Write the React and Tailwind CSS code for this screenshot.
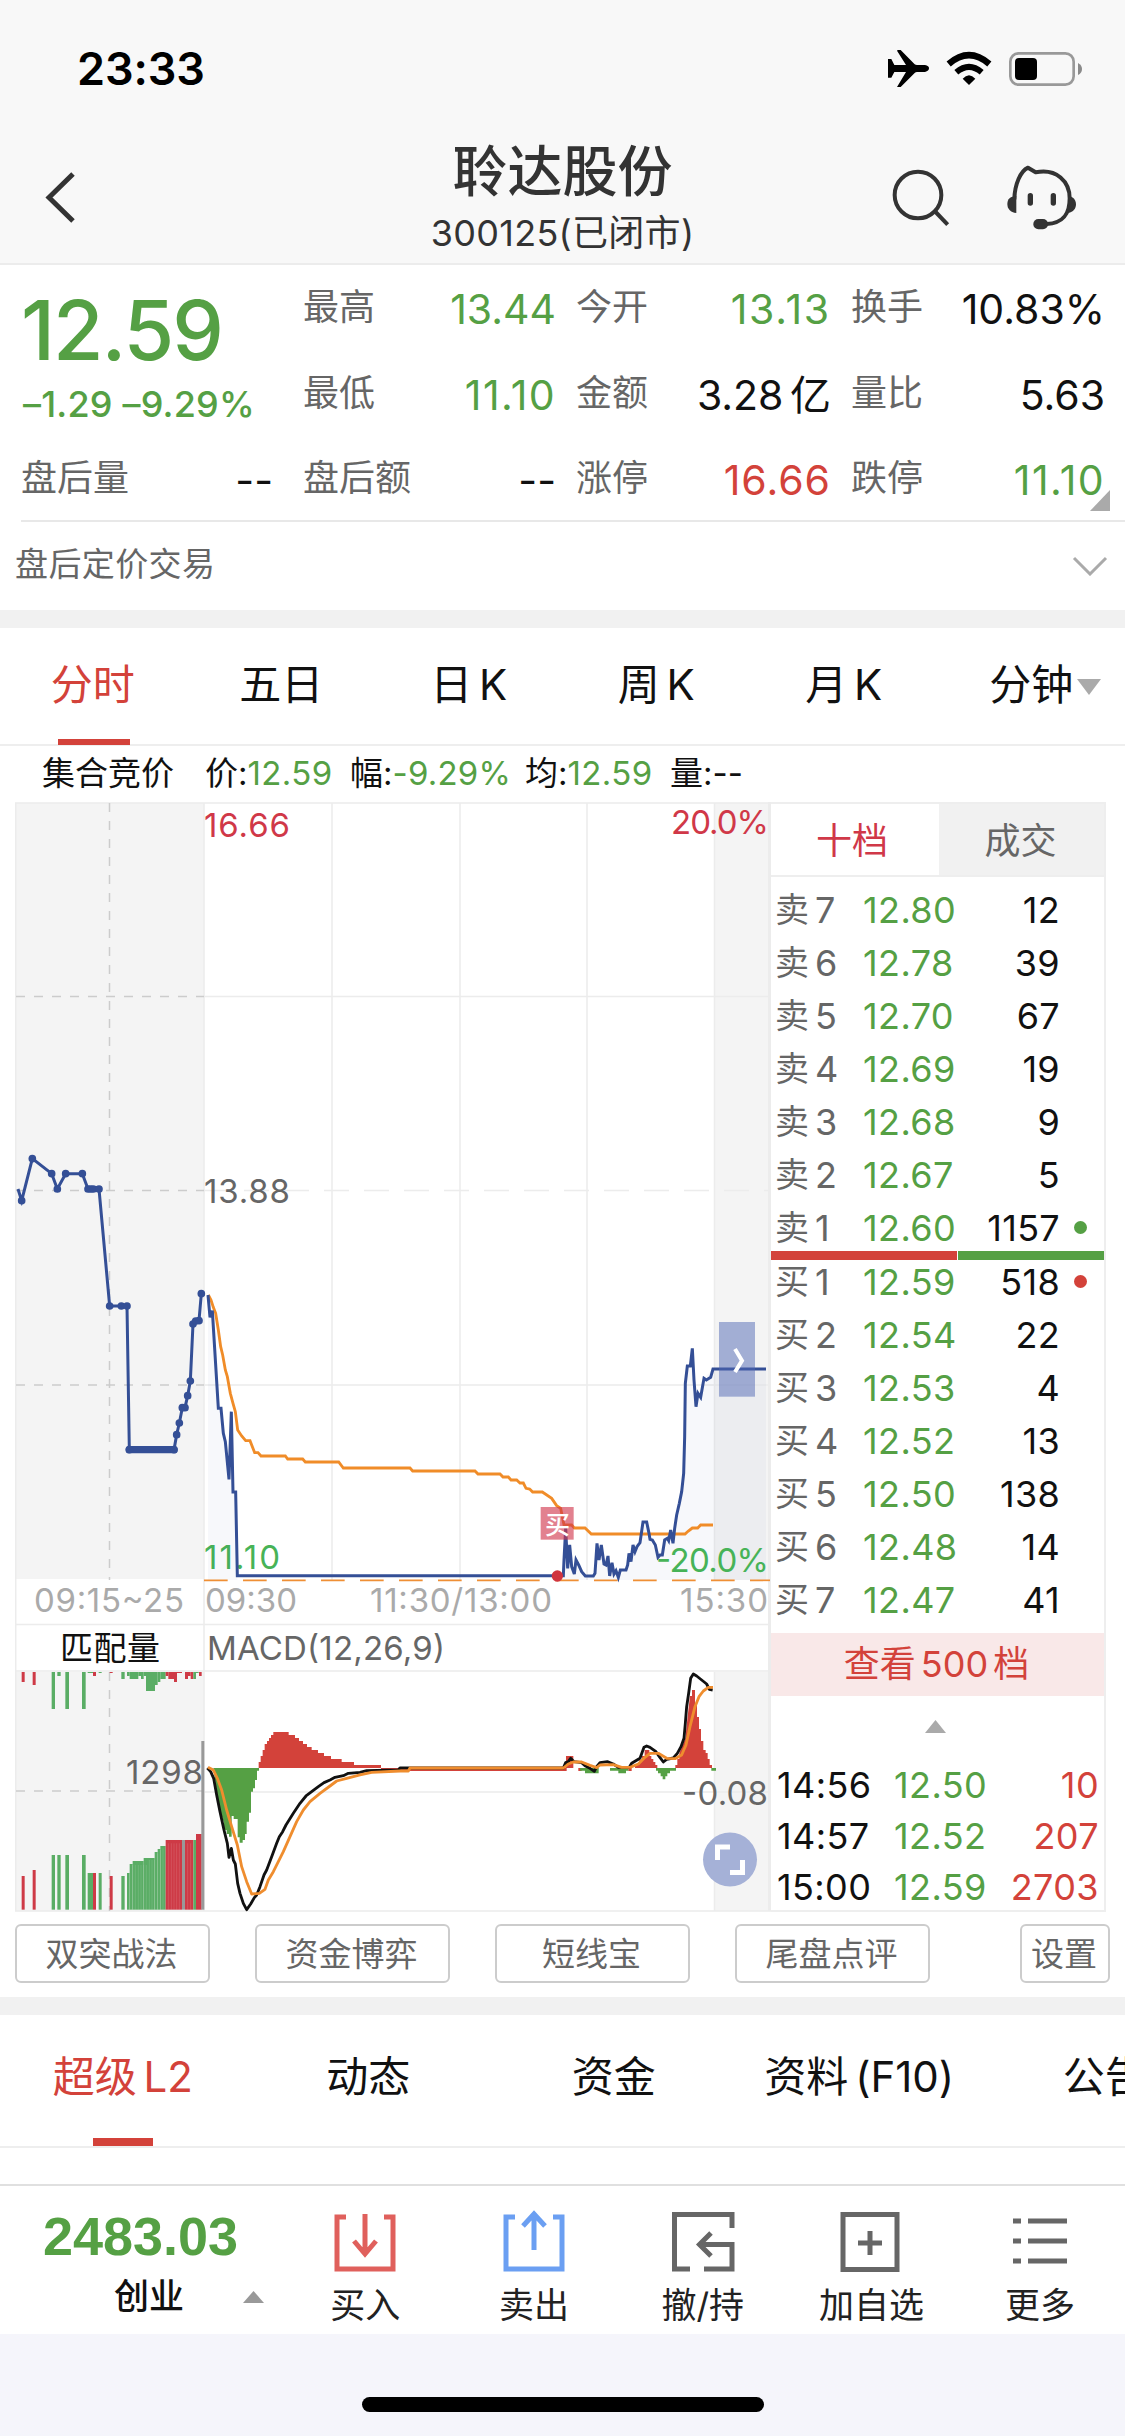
import React from 'react'

const GREEN = '#55a044'
const RED = '#d3423a'

const quotes = [
  { label: '最高', value: '13.44', color: 'text-[#55a044]' },
  { label: '今开', value: '13.13', color: 'text-[#55a044] tracking-[1.8px]' },
  { label: '换手', value: '10.83%', color: 'text-[#111]' },
  { label: '最低', value: '11.10', color: 'text-[#55a044] tracking-[1.4px]' },
  { label: '金额', value: '3.28 亿', color: 'text-[#111] [word-spacing:-5px]' },
  { label: '量比', value: '5.63', color: 'text-[#111]' },
]

const afterHours = [
  { label: '盘后量', value: '--', color: 'text-[#111]' },
  { label: '盘后额', value: '--', color: 'text-[#111]' },
  { label: '涨停', value: '16.66', color: 'text-[#d3423a] tracking-[1px]' },
  { label: '跌停', value: '11.10', color: 'text-[#55a044] tracking-[1.4px]' },
]

const periods = ['分时', '五日', '日 K', '周 K', '月 K', '分钟']

const asks = [
  ['卖', 7, '12.80', '12'],
  ['卖', 6, '12.78', '39'],
  ['卖', 5, '12.70', '67'],
  ['卖', 4, '12.69', '19'],
  ['卖', 3, '12.68', '9'],
  ['卖', 2, '12.67', '5'],
  ['卖', 1, '12.60', '1157', 'bg-[#55a044]'],
]

const bids = [
  ['买', 1, '12.59', '518', 'bg-[#d3423a]'],
  ['买', 2, '12.54', '22'],
  ['买', 3, '12.53', '4'],
  ['买', 4, '12.52', '13'],
  ['买', 5, '12.50', '138'],
  ['买', 6, '12.48', '14'],
  ['买', 7, '12.47', '41'],
]

const trades = [
  ['14:56', '12.50', '10'],
  ['14:57', '12.52', '207'],
  ['15:00', '12.59', '2703'],
]

const strategies = ['双突战法', '资金博弈', '短线宝', '尾盘点评']
const sections = ['超级 L2', '动态', '资金', '资料 (F10)', '公告']

// call auction points, in chart units of a third of a pixel
const auction = [
  [65, 302], [97, 176], [155, 221], [172, 267], [197, 221], [247, 221], [264, 267], [272, 267],
  [280, 267], [297, 267], [329, 618], [364, 618], [381, 618], [388, 1049], [522, 1049], [530, 1004],
  [538, 969], [547, 923], [555, 923], [563, 887], [571, 843], [579, 672], [587, 663], [597, 662], [604, 581],
]

// [x, width, depth, fill]
const g = '#5aad65'
const r = '#ce3a46'
const unmatched = [
  [65, 9, 30, r], [98, 9, 39, r], [155, 10, 111, g], [172, 10, 12, g], [196, 11, 111, g], [246, 11, 111, g],
  [263, 16, 3, g], [279, 9, 12, r], [296, 9, 3, g], [329, 9, 3, r], [364, 10, 21, g], [381, 8, 12, g],
  [389, 26, 21, g], [415, 8, 12, g], [423, 8, 21, g], [431, 7, 12, g], [438, 27, 57, g], [465, 8, 39, g],
  [473, 8, 30, g], [481, 16, 21, g], [497, 8, 12, r], [505, 17, 21, r], [522, 9, 30, r], [531, 15, 3, r],
  [555, 9, 21, r], [564, 8, 12, r], [572, 8, 21, r], [580, 8, 21, g], [588, 8, 3, g], [597, 8, 12, r],
]
const matched = [
  [65, 9, 101, r], [98, 9, 119, r], [155, 10, 164, g], [172, 10, 164, g], [196, 11, 164, g], [246, 11, 164, g],
  [263, 16, 110, g], [279, 9, 110, r], [296, 9, 110, g], [329, 9, 101, r], [364, 10, 101, g], [381, 8, 110, g],
  [389, 9, 137, g], [398, 33, 146, g], [431, 33, 155, g], [464, 9, 173, g], [473, 8, 182, g], [481, 16, 191, g],
  [497, 49, 209, r], [546, 9, 209, '#999'], [555, 25, 209, r], [580, 8, 209, g], [588, 17, 227, r],
]

function StatusIcons() {
  return (
    <svg className="h-[220px] w-[250px]" viewBox="0 0 750 660" fill="none">
      <path
        d="M39 87H49L58 105H93L66 62Q66 60 70 60H77L119 103Q122 105 126 105H150Q162 107 162 115T150 126H126Q122 126 119 129L77 171H66L93 126H58L49 143H39Z"
        fill="#000"
      />
      <path d="M221 102Q282 49 343 102" stroke="#000" strokeWidth="19" />
      <path d="M244 127Q282 94 320 127" stroke="#000" strokeWidth="18" />
      <path d="M263 146Q282 125 301 146L282 165Z" fill="#000" />
      <rect x="406" y="70" width="190" height="94" rx="25" stroke="#999" strokeWidth="8" />
      <rect x="420" y="84" width="66" height="66" rx="12" fill="#000" />
      <path d="M609 99Q621 105 621 117T609 135Z" fill="#8a8a8a" />
      <g stroke="#333">
        <circle cx="129" cy="495" r="70" strokeWidth="12" />
        <path d="M179 543L218 584" strokeWidth="12" />
        <path
          d="M418 508C419 462 437 423 459 413L482 427C545 414 584 455 584 505C584 548 569 579 515 582"
          strokeWidth="12"
          strokeLinejoin="round"
        />
        <path d="M466 497V519M535 497V519" strokeWidth="16" strokeLinecap="round" />
      </g>
      <path d="M424 498V549C406 547 397 537 397 522S406 499 424 498Z" fill="#333" />
      <path d="M580 497C595 500 603 510 603 523S595 546 580 549Z" fill="#333" />
      <rect x="475" y="567" width="44" height="31" rx="15" fill="#333" />
    </svg>
  )
}

function Header() {
  return (
    <header className="relative flex h-[265px] justify-between border-b-2 border-[#ececec] bg-[#f8f8f8]">
      <div className="flex flex-col pl-[43px]">
        <span className="pt-[41px] pl-[34px] text-[45px] leading-[56px] font-semibold tracking-[-0.1px] text-black">23:33</span>
        <svg className="mt-[75px] h-[52px] w-8" viewBox="0 0 32 52" fill="none" stroke="#333" strokeWidth="5">
          <path d="M30 2L6 25.500L30 49" />
        </svg>
      </div>
      <div className="absolute inset-x-0 top-[140px] flex flex-col items-center text-[#333]">
        <h1 className="text-[55px] leading-[62px] font-medium">聆达股份</h1>
        <p className="text-[36px] leading-[62px] tracking-[0.3px]">300125(已闭市)</p>
      </div>
      <div className="pt-[30px]">
        <StatusIcons />
      </div>
    </header>
  )
}

function Quote({ label, value, color }) {
  return (
    <div className="-ml-[2px] flex items-center justify-between pt-[2px] whitespace-nowrap">
      <span className="-mt-1 text-[36px] text-[#666]">{label}</span>
      <span className={`-mr-[2px] text-[41px] ${color}`}>{value}</span>
    </div>
  )
}

function Summary() {
  return (
    <section>
      <div className="relative grid h-[255px] grid-cols-[258px_249px_251px_250px] grid-rows-[86px_86px_83px] gap-x-6 pl-[23px] leading-[48px]">
        <div className="row-span-2 font-medium whitespace-nowrap text-[#55a044]">
          <div className="-ml-[2px] pt-[24px] text-[82px] leading-[84px] tracking-[-2px]">12.59</div>
          <div className="pt-[7px] text-[36px] leading-[48px] tracking-[0.2px]">–1.29 –9.29%</div>
        </div>
        {quotes.map(q => (
          <Quote key={q.label} {...q} />
        ))}
        {afterHours.map((q, i) => (
          <div key={q.label} className={i === 0 ? 'grid pr-[10px]' : 'grid'}>
            <Quote {...q} />
          </div>
        ))}
        <svg className="absolute right-[15px] bottom-[9px] h-[21px] w-5" viewBox="0 0 20 21">
          <path d="M20 0V21H0Z" fill="#aaa" />
        </svg>
      </div>
      <div className="ml-[21px] h-[2px] bg-[#e8e8e8]" />
      <div className="flex h-[88px] items-center justify-between pr-[17px] pl-[15px]">
        <span className="-mt-[2px] text-[33px] tracking-[0.4px] text-[#666]">盘后定价交易</span>
        <svg className="h-5 w-[36px]" viewBox="0 0 36 20" fill="none" stroke="#aaa" strokeWidth="3">
          <path d="M2 2L18 18L34 2" />
        </svg>
      </div>
    </section>
  )
}

function PeriodTabs() {
  return (
    <nav className="grid h-[118px] grid-cols-6 border-b-2 border-[#eee] text-[42px] leading-[48px] text-[#111] [word-spacing:-5px]">
      {periods.map((name, i) => (
        <div key={name} className={`relative flex flex-col items-center pt-[33px] ${i === 0 ? 'pr-[2px] text-[#d3423a]' : ''}`}>
          {name}
          {i === 0 && <span className="mt-[30px] h-[6px] w-[72px] translate-x-px bg-[#d3423a]" />}
          {i === 5 && (
            <svg className="absolute top-[51px] right-[24px] h-4 w-6" viewBox="0 0 24 16">
              <path d="M0 0H24L12 16Z" fill="#aaa" />
            </svg>
          )}
        </div>
      ))}
    </nav>
  )
}

function PriceLine() {
  return (
    <div className="flex h-[56px] items-center pl-[42px] text-[33px] whitespace-nowrap text-[#111]">
      <span className="w-[163px]">集合竞价</span>
      <span className="w-[145px]">价:<b className="font-normal tracking-[0.4px] text-[#55a044]">12.59</b></span>
      <span className="w-[175px]">幅:<b className="font-normal tracking-[0.2px] text-[#55a044]">-9.29%</b></span>
      <span className="w-[145px]">均:<b className="font-normal tracking-[0.4px] text-[#55a044]">12.59</b></span>
      <span>量:--</span>
    </div>
  )
}

function Charts() {
  return (
    <svg className="h-[1110px] w-[756px] shrink-0 text-[33px]" viewBox="15 802 756 1110" fill="none">
      {/* panes */}
      <rect x="16" y="803" width="188" height="776" fill="#f4f4f4" />
      <rect x="16" y="1672" width="188" height="239" fill="#f4f4f4" />
      <rect x="714" y="803" width="55" height="777" fill="#f4f4f4" />
      <rect x="714" y="1672" width="55" height="239" fill="#f4f4f4" />
      <g stroke="#ececec" strokeWidth="1.500">
        <path d="M15 803H771M15.700 803V1911M204 803V1911M332 803V1580M460 803V1580M587 803V1580M714.500 803V1580M714.500 1672V1911" />
        <path d="M204 996.500H769M204 1385H769M15 1624.500H769M15 1671H769M204 1792H769M15 1911H771" />
        <path d="M204 1190.500H769" strokeDasharray="25 15" />
      </g>
      <path d="M769.500 802V1911" stroke="#ececec" strokeWidth="3" />
      <g stroke="#ccc" strokeWidth="1.500">
        <path d="M109.500 803V1580M109.500 1672V1911" strokeDasharray="9 9" />
        <path d="M16 996.500H204M16 1190.500H204M16 1385H204M16 1791H204" strokeDasharray="9 9" />
      </g>

      {/* call auction */}
      <g transform="translate(0 1100) scale(.33333)" fill="#344f96">
        <polyline points={'54,267 ' + auction.map(p => p.join()).join(' ')} fill="none" stroke="#344f96" strokeWidth="9" />
        <path d="M388 1049H522" stroke="#344f96" strokeWidth="22" strokeLinecap="round" />
        <path d="M264 267H297" stroke="#344f96" strokeWidth="18" strokeLinecap="round" />
        {auction.map(([x, y]) => (
          <circle key={x} cx={x} cy={y} r="11.500" />
        ))}
      </g>

      <g fontSize="33">
        <text x="204" y="837" fill="#d03848" textLength="86">16.66</text>
        <text x="671" y="834" fill="#d03848" textLength="98">20.0%</text>
        <text x="204" y="1203" fill="#666" textLength="86">13.88</text>
        <text x="204" y="1569" fill="#47b357" textLength="76">11.10</text>
        <g fill="#aaa">
          <text x="34" y="1612" textLength="150">09:15~25</text>
          <text x="205" y="1612" textLength="92">09:30</text>
          <text x="370" y="1612" textLength="182">11:30/13:00</text>
          <text x="680" y="1612" textLength="88">15:30</text>
        </g>
        <text x="60" y="1660" fill="#111" textLength="100">匹配量</text>
        <text x="207" y="1660" fill="#666" textLength="238">MACD(12,26,9)</text>
      </g>

      {/* intraday price and its average */}
      <g transform="translate(400 1250) scale(.33333)" strokeLinejoin="miter">
        <path
          d="M-576 135L-570 202L-563 182L-545 475L-537 475L-524 575L-513 688L-506 485L-501 726L-493 726L-488 990H-576Z"
          fill="#344f96"
          fillOpacity=".04"
        />
        <path
          d="M490 990V978L497 835L503 955L509 885L523 972L528 930L556 978H580L591 880L597 930L604 885L618 945L636 938L655 982L678 960L699 885L720 878L729 816H740L750 868L774 922L794 870L819 880L838 760L851 670L856 400L862 348H871L877 295L888 470L912 385L939 357H1098V990Z"
          fill="#344f96"
          fillOpacity=".04"
        />
        <path d="M-588 991H1110" stroke="#ef8f35" strokeWidth="5" strokeDasharray="71 46" />
        <polyline
          points="-575,135 -567,150 -560,172 -553,190 -545,240 -538,290 -532,315 -524,360 -518,380 -509,430 -501,460 -494,485 -487,540 -475,558 -463,572 -450,572 -436,608 -426,608 -417,618 -344,618 -337,627 -292,627 -284,636 -184,636 -170,654 30,654 38,663 225,663 234,672 300,672 309,681 325,681 333,690 350,690 360,699 370,699 378,715 389,717 398,726 427,726 455,745 470,767 482,775 492,825 515,825 523,834 555,834 574,852 855,852 865,843 877,834 893,834 902,825 939,825"
          stroke="#f08c28"
          strokeWidth="8.500"
        />
        <polyline
          points="-576,135 -570,202 -563,182 -545,475 -537,475 -530,550 -524,575 -513,688 -506,485 -501,726 -493,726 -488,977 490,977 492,930 497,835 503,955 509,885 515,950 523,972 528,930 536,945 545,965 556,978 580,978 585,970 591,880 597,930 604,885 612,942 618,945 624,918 629,978 636,938 642,972 648,962 655,982 661,960 678,960 683,945 687,910 693,935 699,885 705,905 711,890 720,878 729,816 740,816 747,850 750,868 757,870 766,885 774,922 780,915 787,915 794,870 802,865 806,872 812,840 819,880 824,835 830,795 838,760 845,725 851,670 854,560 856,400 862,348 871,348 877,295 882,390 888,470 894,430 902,442 912,385 919,390 932,382 939,357 1098,357"
          stroke="#344f96"
          strokeWidth="9"
        />
        <circle cx="472" cy="978" r="17" fill="#d0343f" />
        <rect x="422" y="771" width="99" height="98" fill="#d0344b" fillOpacity=".62" />
        <rect x="957" y="216" width="108" height="224" fill="#5068b4" fillOpacity=".5" />
        <path d="M1005 297L1026 332L1005 366" stroke="#fff" strokeWidth="12" />
      </g>
      <text x="545" y="1533.500" fontSize="25" fontWeight="500" fill="#fff">买</text>
      <text x="656" y="1572" fontSize="33" fill="#47b357" textLength="113">-20.0%</text>

      {/* matched volume and MACD */}
      <g transform="translate(0 1610) scale(.33333)">
        {unmatched.map(([x, w, h, fill]) => (
          <rect key={x} x={x} y="186" width={w} height={h} fill={fill} />
        ))}
        {matched.map(([x, w, h, fill]) => (
          <rect key={x} x={x} y={899 - h} width={w} height={h} fill={fill} />
        ))}
        <path
          d="M389 899V790M398 899V765M406 899V765M415 899V765M423 899V765M431 899V765M439 899V765M448 899V750M456 899V750M464 899V750M473 899V730M481 899V720M489 899V715M505 899V700M514 899V700M522 899V700M530 899V700M538 899V700M563 899V700M572 899V700"
          stroke="#fff"
          strokeOpacity=".25"
          strokeWidth="1.500"
        />
        <rect x="604" y="393" width="9" height="506" fill="#999" />
        <path
          d="M640 474L648 530L660 600L672 640V660H680V672H687V680H695V618H701V627H713V682H719V698H728V690H735V672H740V635H747V608H753V545H759V535H765V510H771V482H777V474Z"
          fill={GREEN}
        />
        <path
          d="M776 474V456H782V438H788V420H794V402H801V393H807V384H813V375H820V366H866V375H885V384H897V393H909V402H921V411H935V420H954V429H972V438H993V447H1025V456H1062V465H1143V474H1700V483H1143V474Z"
          fill={RED}
        />
        <path
          d="M1698 474V438H1720V474ZM1735 474V483H1745V474ZM1895 474H1885V483H1895ZM1905 474V462H1918V450H1926V438H1934V420H1948V438H1954V447H1960V456H1966V465H1972V474ZM2026 474V465H2032V447H2038V430L2056 385L2064 310L2070 258H2076V240H2085V285H2091V321H2097V357H2103V393H2110V420H2117V429H2123V447H2129V465H2136V474Z"
          fill={RED}
        />
        <path d="M1740 474H1796V490H1755V482H1740ZM1830 474H1885V482H1878V490H1855V482H1830ZM1968 474H2028V482H2010V490H2002V499H1996V508H1988V499H1982V490H1974V482H1968ZM2134 474H2148V482H2134Z" fill={GREEN} />
        <g strokeWidth="8.500" strokeLinejoin="round">
          <polyline
            points="622,474 632,485 641,505 650,555 660,605 672,660 682,700 687,742 694,715 700,750 706,762 713,820 720,850 730,880 740,899 752,882 763,863 770,855 780,830 792,795 800,780 815,740 830,700 838,680 848,665 858,645 880,610 900,580 918,558 935,545 955,530 972,518 990,510 1005,502 1030,497 1045,490 1080,487 1100,482 1195,480 1200,474 1690,474 1697,458 1705,455 1712,445 1722,455 1745,458 1755,467 1770,475 1783,484 1790,470 1800,458 1822,455 1840,462 1855,472 1888,472 1895,460 1920,445 1932,412 1940,408 1950,412 1968,425 1978,440 1990,456 2000,448 2020,444 2032,430 2043,410 2052,385 2056,340 2060,290 2066,250 2072,205 2080,192 2090,198 2105,210 2120,222 2128,238 2138,240"
            stroke="#111"
          />
          <polyline
            points="624,472 640,480 652,505 665,540 680,600 695,650 712,705 725,770 740,815 755,852 778,850 795,838 805,810 820,785 850,725 870,680 890,635 910,600 930,575 960,550 990,528 1010,513 1040,505 1080,495 1115,487 1200,483 1225,483 1230,474 1690,474 1705,462 1720,456 1745,456 1770,466 1790,473 1800,465 1840,464 1865,472 1890,472 1915,462 1935,442 1950,430 1975,430 2000,445 2025,446 2045,435 2058,405 2070,350 2085,290 2097,260 2110,243 2125,232 2139,232"
            stroke="#ef8d2e"
          />
        </g>
      </g>
      <text x="126" y="1784" fontSize="33" fill="#666" textLength="77">1298</text>
      <text x="682" y="1805" fontSize="33" fill="#666" textLength="86">-0.08</text>
      <circle cx="730" cy="1859.500" r="27" fill="#a5b1d7" />
      <path d="M730 1847H717.500V1860M742.500 1860V1872.500H730" stroke="#fff" strokeWidth="5" />
    </svg>
  )
}

function BookRow({ row }) {
  const [side, level, price, qty, dot] = row
  return (
    <div className="flex h-[53px] items-center pl-[4px] text-[36px]">
      <span className="w-[40px] text-[34px] text-[#666]">{side}</span>
      <span className="w-[48px] text-[#666]">{level}</span>
      <span className="w-[96px] tracking-[0.4px] text-[#55a044]">{price}</span>
      <span className="w-[101px] text-right tracking-[0.3px] text-[#111]">{qty}</span>
      {dot && <span className={`ml-[14px] size-[13px] rounded-full ${dot}`} />}
    </div>
  )
}

function OrderBook() {
  return (
    <aside className="flex w-[335px] flex-col overflow-hidden border-y-2 border-r-2 border-[#eee]">
      <div className="flex h-[73px] shrink-0 border-b-2 border-[#eee] text-[36px] leading-[74px]">
        <span className="w-[168px] pr-[6px] text-center text-[#d03848]">十档</span>
        <span className="flex-1 bg-[#f1f1f1] pr-[2px] text-center text-[#666]">成交</span>
      </div>
      <div className="h-[378px] shrink-0 pt-[6px]">
        {asks.map(row => <BookRow key={row[1]} row={row} />)}
      </div>
      <div className="relative -mt-1 -mb-[5px] flex h-[9px] shrink-0 gap-[1px]">
        <span className="w-[186px] bg-[#d3423a]" />
        <span className="-mr-[2px] flex-1 bg-[#55a044]" />
      </div>
      <div className="h-[378px] shrink-0">
        {bids.map(row => <BookRow key={row[1]} row={row} />)}
      </div>
      <div className="-mr-[2px] h-[63px] shrink-0 bg-[#f9e8e8] pr-1 text-center text-[36px] leading-[63px] text-[#d3423a] [word-spacing:-5px]">
        查看 500 档
      </div>
      <svg className="mt-[24px] ml-[154px] h-[13px] w-[21px] shrink-0" viewBox="0 0 21 13">
        <path d="M10.500 0L21 13H0Z" fill="#aaa" />
      </svg>
      <div className="mt-[26px] shrink-0">
        {trades.map(([time, price, qty]) => (
          <div key={time} className="flex h-[51px] items-center pr-[5px] pl-[6px] text-[36px]">
            <span className="w-[117px] tracking-[0.4px] text-[#111]">{time}</span>
            <span className="tracking-[0.4px] text-[#55a044]">{price}</span>
            <span className="ml-auto tracking-[0.4px] text-[#d3423a]">{qty}</span>
          </div>
        ))}
      </div>
    </aside>
  )
}

function Strategies() {
  return (
    <div className="flex h-[85px] gap-[45px] px-[15px] pt-[12px] text-[33px] text-[#666]">
      {strategies.map(name => (
        <button key={name} className="h-[59px] w-[195px] rounded-[6px] border-2 border-[#ccc] pr-[2px] leading-[54px]">{name}</button>
      ))}
      <button className="ml-auto h-[59px] w-[90px] rounded-[6px] border-2 border-[#ccc] pr-[2px] leading-[54px] whitespace-nowrap">设置</button>
    </div>
  )
}

function SectionTabs() {
  return (
    <nav className="flex h-[133px] overflow-hidden border-b-2 border-[#eee] text-[42px] leading-[48px] text-[#111] [word-spacing:-5px]">
      {sections.map((name, i) => (
        <div key={name} className={`flex w-[245.500px] shrink-0 flex-col items-center pt-[38px] whitespace-nowrap ${i === 0 ? 'text-[#d3423a]' : ''}`}>
          {name}
          {i === 0 && <span className="mt-[37px] h-[9px] w-[60px] bg-[#d3423a]" />}
        </div>
      ))}
    </nav>
  )
}

const actions = [
  { name: '买入', color: 'text-[#e0605c]', d: 'M12 5H3V57H59V5H50', thin: 'M31 2V40M20 29L31 42L42 29' },
  { name: '卖出', color: 'text-[#6b9ff2]', d: 'M12 5H3V57H59V5H50', thin: 'M31 38V3M20 14L31 2L42 14' },
  { name: '撤/持', color: 'text-[#666]', d: 'M60 16V2.500H2.500V57H18M32 57H60V32.500H27', thin: 'M39 21L27.500 32.500L39 44' },
  { name: '加自选', color: 'text-[#666]', d: 'M3 2.500H57V57.500H3ZM30 19V43M18 31H42', thin: '' },
  { name: '更多', color: 'text-[#666]', d: 'M4 9H12M19 9H58M4 29H12M19 29H58M4 49H12M19 49H58', thin: '' },
]

function BottomBar() {
  return (
    <footer className="flex h-[150px] border-t-2 border-[#e0e0e0] bg-white">
      <div className="relative w-[281px]">
        <div className="pt-[22px] text-center font-['Liberation_Sans'] text-[54px] leading-[56px] font-bold text-[#55a044]">2483.03</div>
        <div className="pt-[8px] pl-[114px] text-[35px] leading-[48px] font-medium text-[#111]">创业</div>
        <svg className="absolute top-[105px] left-[243px] h-[12px] w-[21px]" viewBox="0 0 21 12">
          <path d="M10.500 0L21 12H0Z" fill="#999" />
        </svg>
      </div>
      {actions.map(a => (
        <div key={a.name} className="flex w-[168.700px] flex-col items-center pt-[26px] text-[35px] leading-[48px] text-[#222]">
          <svg className={`mb-[9px] h-[60px] w-[62px] shrink-0 overflow-visible ${a.color}`} viewBox="0 0 62 60" fill="none" stroke="currentColor">
            <path d={a.d} strokeWidth="5" />
            {a.thin && <path d={a.thin} strokeWidth="5" />}
          </svg>
          {a.name}
        </div>
      ))}
    </footer>
  )
}

export default function App() {
  return (
    <div className="h-[2436px] w-[1125px] overflow-hidden bg-white font-['Inter','Noto_Sans_CJK_SC',sans-serif]">
      <Header />
      <Summary />
      <div className="h-[18px] bg-[#f1f1f1]" />
      <PeriodTabs />
      <PriceLine />
      <main className="flex h-[1110px]">
        <div className="w-[15px]" />
        <Charts />
        <OrderBook />
      </main>
      <Strategies />
      <div className="h-[18px] bg-[#f1f1f1]" />
      <SectionTabs />
      <div className="h-[36px]" />
      <BottomBar />
      <div className="flex h-[102px] justify-center bg-[#f5f5fb] pt-[63px]">
        <div className="h-[15px] w-[402px] rounded-full bg-black" />
      </div>
    </div>
  )
}
